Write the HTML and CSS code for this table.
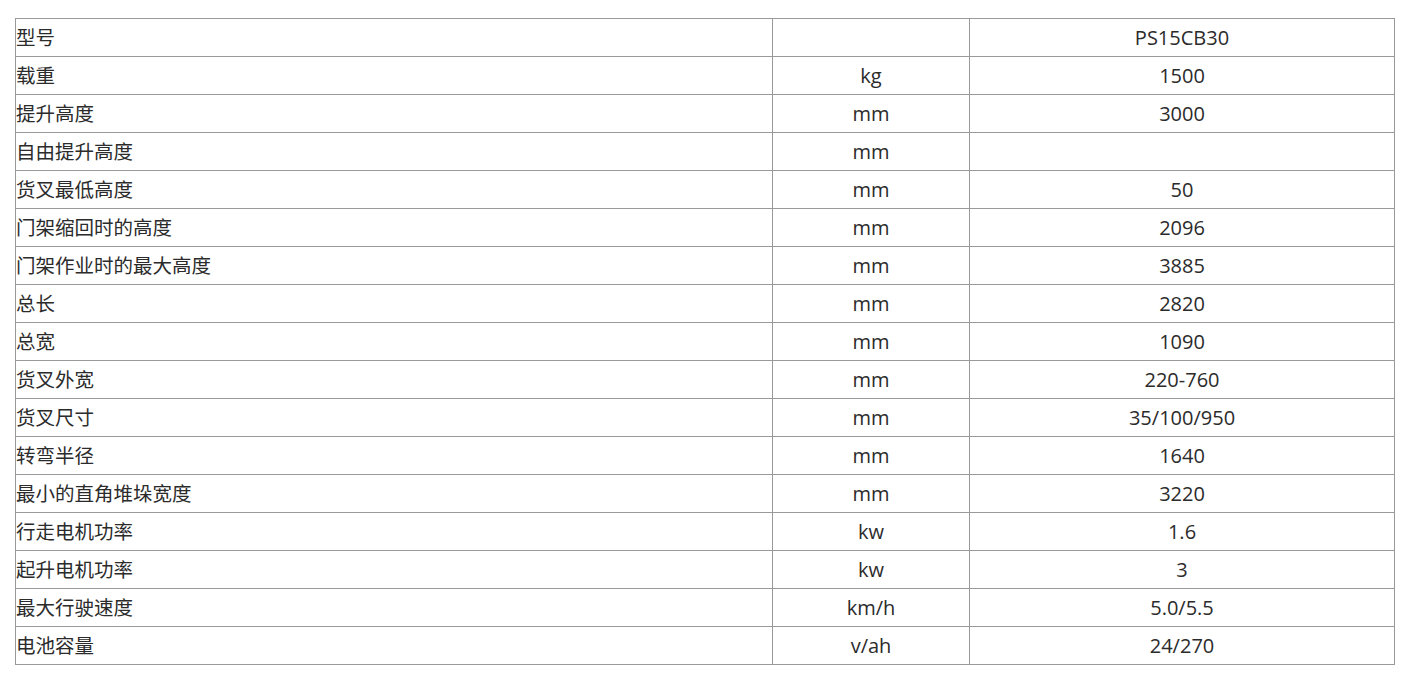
FILE: index.html
```html
<!DOCTYPE html>
<html lang="zh">
<head>
<meta charset="utf-8">
<title>参数</title>
<link rel="stylesheet" href="styles.css">
</head>
<body>
<table class="spec">
<colgroup><col class="c1"><col class="c2"><col class="c3"></colgroup>
<tbody>
<tr><td>型号</td><td></td><td>PS15CB30</td></tr>
<tr><td>载重</td><td>kg</td><td>1500</td></tr>
<tr><td>提升高度</td><td>mm</td><td>3000</td></tr>
<tr><td>自由提升高度</td><td>mm</td><td></td></tr>
<tr><td>货叉最低高度</td><td>mm</td><td>50</td></tr>
<tr><td>门架缩回时的高度</td><td>mm</td><td>2096</td></tr>
<tr><td>门架作业时的最大高度</td><td>mm</td><td>3885</td></tr>
<tr><td>总长</td><td>mm</td><td>2820</td></tr>
<tr><td>总宽</td><td>mm</td><td>1090</td></tr>
<tr><td>货叉外宽</td><td>mm</td><td>220-760</td></tr>
<tr><td>货叉尺寸</td><td>mm</td><td>35/100/950</td></tr>
<tr><td>转弯半径</td><td>mm</td><td>1640</td></tr>
<tr><td>最小的直角堆垛宽度</td><td>mm</td><td>3220</td></tr>
<tr><td>行走电机功率</td><td>kw</td><td>1.6</td></tr>
<tr><td>起升电机功率</td><td>kw</td><td>3</td></tr>
<tr><td>最大行驶速度</td><td>km/h</td><td>5.0/5.5</td></tr>
<tr><td>电池容量</td><td>v/ah</td><td>24/270</td></tr>
</tbody>
</table>
</body>
</html>
```
FILE: styles.css
```css
html, body {
  margin: 0;
  padding: 0;
  background: #fff;
}
body {
  padding: 18px 0 0 15px;
  font-family: "Open Sans", "Noto Sans CJK SC", sans-serif;
  color: #2b2b2b;
  font-size: 20px;
}
.spec {
  border-collapse: collapse;
  table-layout: fixed;
  width: 1379px;
}
.c1 { width: 757px; }
.c2 { width: 197px; }
.c3 { width: 425px; }
.spec td {
  border: 1px solid #999;
  height: 37px;
  padding: 0;
  text-align: center;
  vertical-align: middle;
  line-height: 26px;
  white-space: nowrap;
}
.spec td:first-child {
  text-align: left;
  font-size: 19.5px;
}
```
